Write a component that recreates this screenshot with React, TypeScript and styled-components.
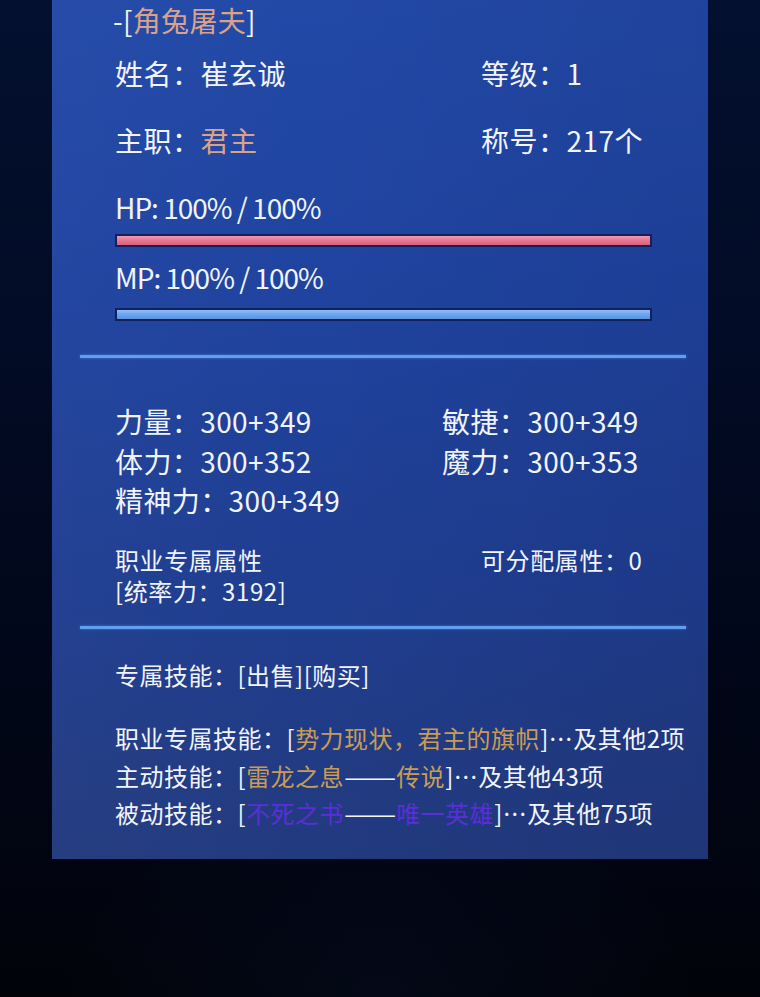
import styled, { createGlobalStyle } from "styled-components";

const GlobalStyle = createGlobalStyle`
  html, body {
    margin: 0;
    padding: 0;
  }
  body {
    background: #02071a;
    font-family: "Noto Sans CJK SC", "Noto Sans", sans-serif;
    color: #f2f4fb;
  }
`;

const Page = styled.div`
  min-height: 997px;
  background:
    radial-gradient(ellipse 60% 30% at 50% 100%, rgba(10, 20, 50, 0.35), transparent 70%),
    linear-gradient(180deg, #03102f 0%, #020a22 45%, #01040f 90%, #010309 100%);
  overflow: hidden;
`;

const Panel = styled.section`
  margin-left: 52px;
  width: 656px;
  height: 859px;
  box-sizing: border-box;
  background:
    linear-gradient(90deg, rgba(255, 255, 255, 0.02) 0%, transparent 40%, rgba(0, 0, 30, 0.08) 100%),
    linear-gradient(180deg, #2249a7 0%, #1f439f 35%, #1f3e92 65%, #223a7e 100%);
  display: flex;
  flex-direction: column;
`;

const Block = styled.div<{ $top?: number }>`
  padding-left: 63px;
  margin-top: ${(p) => p.$top ?? 0}px;
`;

const Title = styled.div`
  margin-left: -2px;
  font-size: 28px;
  line-height: 40px;
  letter-spacing: 0.3px;
`;

const Accent = styled.span<{ $tone: "rose" | "gold" | "violet" }>`
  color: ${(p) =>
    p.$tone === "rose" ? "#dba28a" : p.$tone === "gold" ? "#c99c55" : "#5a2ed8"};
`;

// long dash between skill name and rank
const Dash = styled.span`
  display: inline-block;
  width: 52px;
  transform: scaleX(1.3);
  transform-origin: left center;
  letter-spacing: 0;
`;

const InfoGrid = styled.div`
  display: grid;
  grid-template-columns: 366px auto;
  row-gap: 27px;
  font-size: 28px;
  line-height: 40px;
  letter-spacing: 0.5px;
`;

const BarLabel = styled.div<{ $top: number }>`
  margin-top: ${(p) => p.$top}px;
  font-size: 28px;
  line-height: 40px;
  letter-spacing: -1px;
`;

const Bar = styled.div<{ $kind: "hp" | "mp"; $top: number }>`
  margin-top: ${(p) => p.$top}px;
  width: 537px;
  height: 13px;
  box-sizing: border-box;
  border: 2px solid #13215a;
  background: ${(p) =>
    p.$kind === "hp"
      ? "linear-gradient(180deg, #f398b2 0%, #e97894 45%, #d9607f 100%)"
      : "linear-gradient(180deg, #8fbff8 0%, #6fa6ef 45%, #5a92e3 100%)"};
`;

const Divider = styled.div<{ $top: number }>`
  margin: ${(p) => p.$top}px 0 0 28px;
  width: 606px;
  height: 3px;
  background: #5f9ff0;
  box-shadow: 0 0 3px rgba(110, 170, 255, 0.5);
`;

const StatGrid = styled.div`
  display: grid;
  grid-template-columns: 327px auto;
  font-size: 28px;
  line-height: 39.5px;
  letter-spacing: 0.4px;
`;

const SmallGrid = styled.div`
  display: grid;
  grid-template-columns: 366px auto;
  font-size: 24px;
  line-height: 31px;
  letter-spacing: 0.6px;
`;

const Lines = styled.div`
  font-size: 24px;
  line-height: 37.5px;
  letter-spacing: 0.5px;
`;

const Line = styled.div`
  white-space: nowrap;
`;

const stats = [
  ["力量", "300+349"],
  ["敏捷", "300+349"],
  ["体力", "300+352"],
  ["魔力", "300+353"],
  ["精神力", "300+349"],
];

export default function App() {
  return (
    <>
      <GlobalStyle />
      <Page>
        <Panel>
          <Block>
            <Title>
              -[<Accent $tone="rose">角兔屠夫</Accent>]
            </Title>
          </Block>

          <Block $top={13}>
            <InfoGrid>
              <div>姓名：崔玄诚</div>
              <div>等级：1</div>
              <div>
                主职：<Accent $tone="rose">君主</Accent>
              </div>
              <div>称号：217个</div>
            </InfoGrid>
          </Block>

          <Block>
            <BarLabel $top={27}>HP: 100% / 100%</BarLabel>
            <Bar $kind="hp" $top={7} />
            <BarLabel $top={10}>MP: 100% / 100%</BarLabel>
            <Bar $kind="mp" $top={11} />
          </Block>

          <Divider $top={34} />

          <Block $top={44}>
            <StatGrid>
              {stats.map(([name, value]) => (
                <div key={name}>
                  {name}：{value}
                </div>
              ))}
            </StatGrid>
          </Block>

          <Block $top={23}>
            <SmallGrid>
              <div>职业专属属性</div>
              <div>可分配属性：0</div>
              <div>[统率力：3192]</div>
            </SmallGrid>
          </Block>

          <Divider $top={20} />

          <Block $top={27}>
            <Lines>
              <Line>专属技能：[出售][购买]</Line>
            </Lines>
          </Block>

          <Block $top={26}>
            <Lines>
              <Line>
                职业专属技能：[<Accent $tone="gold">势力现状，君主的旗帜</Accent>]…及其他2项
              </Line>
              <Line>
                主动技能：[<Accent $tone="gold">雷龙之息</Accent>
                <Dash>——</Dash>
                <Accent $tone="gold">传说</Accent>]…及其他43项
              </Line>
              <Line>
                被动技能：[<Accent $tone="violet">不死之书</Accent>
                <Dash>——</Dash>
                <Accent $tone="violet">唯一英雄</Accent>]…及其他75项
              </Line>
            </Lines>
          </Block>
        </Panel>
      </Page>
    </>
  );
}
